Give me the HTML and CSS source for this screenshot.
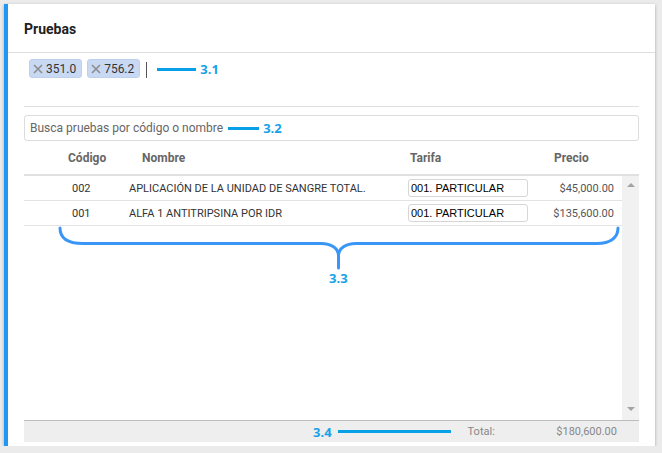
FILE: index.html
```html
<!DOCTYPE html>
<html lang="es">
<head>
<meta charset="utf-8">
<title>Pruebas</title>
<link rel="stylesheet" href="styles.css">
</head>
<body>
<div class="card">
  <div class="card-header"><h2 class="title">Pruebas</h2></div>
  <div class="card-body">
    <div class="chips">
      <span class="chip"><svg class="chip-x" width="10" height="10" viewBox="0 0 10 10"><path d="M1 1 L9 9 M9 1 L1 9" stroke="#8c8c8c" stroke-width="1.6" fill="none"/></svg>351.0</span>
      <span class="chip"><svg class="chip-x" width="10" height="10" viewBox="0 0 10 10"><path d="M1 1 L9 9 M9 1 L1 9" stroke="#8c8c8c" stroke-width="1.6" fill="none"/></svg>756.2</span>
      <span class="caret"></span>
      <span class="note"><span class="note-line w39"></span><span class="note-label">3.1</span></span>
    </div>
    <div class="search">
      <span class="placeholder">Busca pruebas por código o nombre</span>
      <span class="note"><span class="note-line w31"></span><span class="note-label">3.2</span></span>
    </div>
    <div class="thead">
      <span class="th th-code">Código</span>
      <span class="th">Nombre</span>
      <span class="th">Tarifa</span>
      <span class="th">Precio</span>
    </div>
    <div class="tbody">
      <div class="rows">
        <div class="row">
          <span class="td td-code">002</span>
          <span class="td">APLICACIÓN DE LA UNIDAD DE SANGRE TOTAL.</span>
          <span class="tarifa">001. PARTICULAR</span>
          <span class="td td-price">$45,000.00</span>
        </div>
        <div class="row">
          <span class="td td-code">001</span>
          <span class="td">ALFA 1 ANTITRIPSINA POR IDR</span>
          <span class="tarifa">001. PARTICULAR</span>
          <span class="td td-price">$135,600.00</span>
        </div>
      </div>
      <div class="scrollbar">
        <span class="arrow-up"></span>
        <span class="arrow-down"></span>
      </div>
      <div class="brace">
        <svg width="600" height="120" viewBox="24 176 600 120">
          <path d="M60,228 C60,238 68,243.5 83,243.5 L321,243.5 C331,243.5 338.5,248 338.5,256 L338.5,268 M338.5,256 C338.5,248 346,243.5 356,243.5 L597,243.5 C610,243.5 618,238 618,228" stroke="#3996f6" stroke-width="3" fill="none" stroke-linecap="round"/>
        </svg>
        <span class="note-label brace-label">3.3</span>
      </div>
    </div>
    <div class="tfoot">
      <span class="note"><span class="note-label">3.4</span><span class="note-line w113"></span></span>
      <span class="total-label">Total:</span>
      <span class="total-value">$180,600.00</span>
    </div>
  </div>
</div>
</body>
</html>
```

FILE: styles.css
```css
* { box-sizing: border-box; }
html, body { margin: 0; }
body {
  background: #ebebeb;
  padding: 4px 0 0 4px;
  font-family: Roboto, "Liberation Sans", sans-serif;
  color: #333;
}
.card {
  width: 651px;
  height: 442px;
  background: #fff;
  border-left: 4px solid #2196f3;
  box-shadow: 0 1px 3px rgba(0,0,0,0.3);
  display: flex;
  flex-direction: column;
  padding-bottom: 4px;
}
.card-header {
  height: 49px;
  border-bottom: 1px solid #dedede;
  padding: 0 16px;
  display: flex;
  align-items: center;
}
.title {
  margin: 0;
  font-size: 14px;
  font-weight: 700;
  color: #212121;
  padding-top: 1px;
}
.card-body {
  flex: 1;
  display: flex;
  flex-direction: column;
  padding: 0 16px;
}
.chips {
  height: 54px;
  border-bottom: 1px solid #e0e0e0;
  display: flex;
  align-items: flex-start;
  padding: 6px 0 0 5px;
}
.chip {
  height: 19px;
  display: inline-flex;
  align-items: center;
  background: #c9d9f3;
  border: 1px solid #bed0ee;
  border-radius: 3px;
  padding: 0 5px 0 3px;
  font-size: 12px;
  color: #333;
  margin-right: 5px;
}
.chip-x { margin-right: 3px; }
.caret {
  width: 1px;
  height: 16px;
  background: #555;
  margin: 3px 0 0 1px;
}
.note {
  display: inline-flex;
  align-items: center;
}
.chips .note { margin: 2px 0 0 10px; height: 16px; }
.note-line {
  display: inline-block;
  height: 3px;
  background: #07a0e6;
}
.w39 { width: 39px; margin-right: 4px; }
.w31 { width: 31px; margin-right: 4px; }
.w113 { width: 113px; margin-left: 6px; }
.note-label {
  font-size: 13px;
  font-weight: 700;
  color: #16a2e8;
  font-family: "Open Sans", Roboto, sans-serif;
}
.search {
  margin-top: 8px;
  height: 26px;
  border: 1px solid #dcdcdc;
  border-radius: 3px;
  display: flex;
  align-items: center;
  padding-left: 5px;
}
.placeholder {
  font-size: 12px;
  color: #666;
  margin-right: 5px;
}
.thead {
  height: 35px;
  border-bottom: 2px solid #e0e0e0;
  display: grid;
  grid-template-columns: 118px 268px 144px 1fr;
  align-items: center;
}
.th {
  font-size: 12px;
  font-weight: 700;
  color: #666;
}
.th-code { padding-left: 44px; }
.tbody {
  flex: 1;
  position: relative;
  display: grid;
  grid-template-columns: 1fr 17px;
}
.rows { display: flex; flex-direction: column; }
.row {
  height: 25px;
  border-bottom: 1px solid #e3e3e3;
  display: grid;
  grid-template-columns: 105px 279px 120px 1fr;
  align-items: center;
  padding-right: 8px;
}
.td {
  font-size: 11px;
  color: #333;
}
.td-code { padding-left: 48px; }
.td-price { text-align: right; color: #555; }
.tarifa {
  height: 18px;
  border: 1px solid #d6d6d6;
  border-radius: 3px;
  font-family: "Liberation Sans", Arial, sans-serif;
  font-size: 11px;
  color: #000;
  display: flex;
  align-items: center;
  padding-left: 2px;
}
.scrollbar {
  background: #f1f1f1;
  display: flex;
  flex-direction: column;
  justify-content: space-between;
  align-items: center;
  padding: 7px 0 9px;
}
.arrow-up, .arrow-down {
  width: 0;
  height: 0;
  border-left: 4px solid transparent;
  border-right: 4px solid transparent;
}
.arrow-up { border-bottom: 4px solid #a3a3a3; }
.arrow-down { border-top: 4px solid #a3a3a3; }
.brace {
  position: absolute;
  left: 0;
  top: 0;
  width: 600px;
  height: 120px;
  pointer-events: none;
}
.brace svg { display: block; }
.brace-label {
  position: absolute;
  left: 305px;
  top: 93px;
}
.tfoot {
  height: 22px;
  border-top: 1px solid #bcbcbc;
  background: #eeeeee;
  display: flex;
  align-items: center;
  font-size: 11px;
  color: #888;
}
.tfoot .note { margin-left: 289px; }
.total-label { margin-left: 17px; }
.total-value { margin-left: auto; margin-right: 22px; }
```
